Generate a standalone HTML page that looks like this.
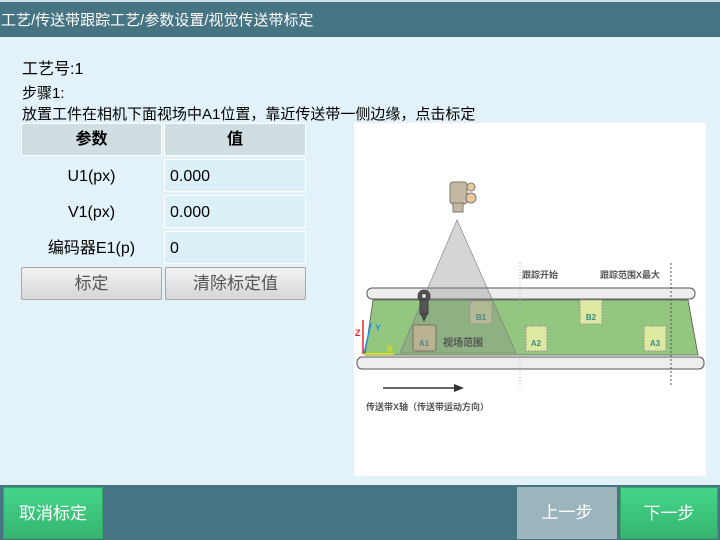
<!DOCTYPE html>
<html><head><meta charset="utf-8"><style>
*{margin:0;padding:0;box-sizing:border-box}
body{width:720px;height:540px;background:#e2f2f8;font-family:"Liberation Sans","Noto Sans CJK SC",sans-serif;position:relative;overflow:hidden;color:#000}
.a{position:absolute}
.hdr{left:0;top:0;width:720px;height:37px;background:#467482;color:#fff;font-size:15px;line-height:37px;padding-left:1px;border-top:2px solid #cfdfe4}
.th{background:#d0dde1;border:1px solid #fff;font-weight:bold;font-size:16px;text-align:center;line-height:31px}
.lb{font-size:16px;text-align:center;line-height:33px}
.v{background:#dbf0f7;border:1px solid #fff;font-size:16px;line-height:33px;padding-left:5px}
.btn{border:1px solid #a9a9a9;border-radius:2px;background:linear-gradient(#f4f4f4,#d6d6d6);color:#555;font-size:17px;text-align:center;line-height:32px}
.ft{left:0;top:485px;width:720px;height:55px;background:#467482}
.g{background:linear-gradient(#44d58a,#36b56f);border:1px solid #2fa862;color:#fff;font-size:17px;text-align:center;line-height:51px}
</style></head><body>
<div class="a hdr">工艺/传送带跟踪工艺/参数设置/视觉传送带标定</div>
<div class="a" style="left:22px;top:55px;font-size:16px">工艺号:1</div>
<div class="a" style="left:22px;top:83px;font-size:15px;line-height:21px">步骤1:<br>放置工件在相机下面视场中A1位置，靠近传送带一侧边缘，点击标定</div>
<div class="a th" style="left:21px;top:123px;width:141px;height:33px">参数</div>
<div class="a th" style="left:164px;top:123px;width:142px;height:33px">值</div>
<div class="a lb" style="left:21px;top:160px;width:141px">U1(px)</div>
<div class="a v" style="left:164px;top:159px;width:142px;height:33px">0.000</div>
<div class="a lb" style="left:21px;top:196px;width:141px">V1(px)</div>
<div class="a v" style="left:164px;top:195px;width:142px;height:33px">0.000</div>
<div class="a lb" style="left:21px;top:232px;width:141px">编码器E1(p)</div>
<div class="a v" style="left:164px;top:231px;width:142px;height:33px">0</div>
<div class="a btn" style="left:21px;top:267px;width:141px;height:33px">标定</div>
<div class="a btn" style="left:165px;top:267px;width:141px;height:33px">清除标定值</div>
<svg class="a" style="left:0;top:0" width="720" height="540">
<rect x="354" y="123" width="352" height="353" fill="#fff"/>
<rect x="367" y="288" width="328" height="11" rx="5" fill="#eee" stroke="#555"/>
<polygon points="373,300 688,300 698,355 365,355" fill="#93c780" stroke="#555" stroke-width="0.8"/>
<g font-size="8" font-weight="bold" fill="#3a8a80" text-anchor="middle">
<rect x="470" y="301" width="22" height="23" fill="#cbd39d" stroke="#999" stroke-dasharray="2,1"/><text x="481" y="320">B1</text>
<rect x="580" y="300" width="22" height="24" fill="#dde8a0" stroke="#999" stroke-dasharray="2,1"/><text x="591" y="320">B2</text>
<rect x="526" y="326" width="21" height="25" fill="#dde8a0" stroke="#999" stroke-dasharray="2,1"/><text x="536" y="346">A2</text>
<rect x="644" y="326" width="22" height="25" fill="#dde8a0" stroke="#999" stroke-dasharray="2,1"/><text x="655" y="346">A3</text>
<rect x="413" y="325" width="23" height="26" rx="2" fill="#d8c99a" stroke="#665"/><text x="424" y="346">A1</text>
</g>
<polygon points="457,220 400,353 516,353" fill="#888" fill-opacity="0.35" stroke="#777" stroke-width="0.6"/>
<rect x="357" y="357" width="347" height="12" rx="5" fill="#eee" stroke="#555"/>
<line x1="520" y1="263" x2="520" y2="387" stroke="#aaa" stroke-dasharray="1,2"/>
<line x1="671" y1="263" x2="671" y2="387" stroke="#555" stroke-dasharray="2,2"/>
<g fill="#555" font-size="9" font-weight="bold">
<text x="522" y="278">跟踪开始</text><text x="600" y="278">跟踪范围X最大</text>
<text x="443" y="346" font-size="10">视场范围</text>
<text x="366" y="410">传送带X轴（传送带运动方向）</text></g>
<line x1="383" y1="388" x2="455" y2="388" stroke="#333" stroke-width="1.5"/><polygon points="454,384 464,388 454,392" fill="#333"/>
<g><rect x="450" y="182" width="17" height="22" rx="3" fill="#c4b8a0" stroke="#777"/><rect x="453" y="203" width="10" height="9" fill="#c4b8a0" stroke="#777"/><circle cx="471" cy="187" r="4" fill="#e8c89a" stroke="#777"/><circle cx="471" cy="198" r="5" fill="#e8c89a" stroke="#777"/></g>
<g fill="#555" stroke="#333" stroke-width="0.8"><circle cx="424" cy="296" r="6"/><rect x="420" y="300" width="8" height="14"/><polygon points="421,314 427,314 424,321"/><circle cx="424" cy="296" r="2.5" fill="#ddd"/></g>
<line x1="363" y1="354" x2="363" y2="320" stroke="#e22" stroke-width="1.5"/><text x="355" y="336" fill="#e22" font-size="9" font-weight="bold">Z</text>
<line x1="364" y1="354" x2="371" y2="323" stroke="#2890e0" stroke-width="1.5"/><text x="375" y="331" fill="#2890e0" font-size="9" font-weight="bold">Y</text>
<line x1="364" y1="354" x2="394" y2="354" stroke="#ee0" stroke-width="1.5"/><text x="387" y="352" fill="#dd0" font-size="9" font-weight="bold">X</text>
</svg>
<div class="a ft"></div>
<div class="a g" style="left:3px;top:487px;width:100px;height:52px">取消标定</div>
<div class="a" style="left:517px;top:487px;width:100px;height:52px;background:#9cb4bb;color:#fff;font-size:17px;text-align:center;line-height:52px">上一步</div>
<div class="a g" style="left:620px;top:487px;width:98px;height:52px">下一步</div>
</body></html>
